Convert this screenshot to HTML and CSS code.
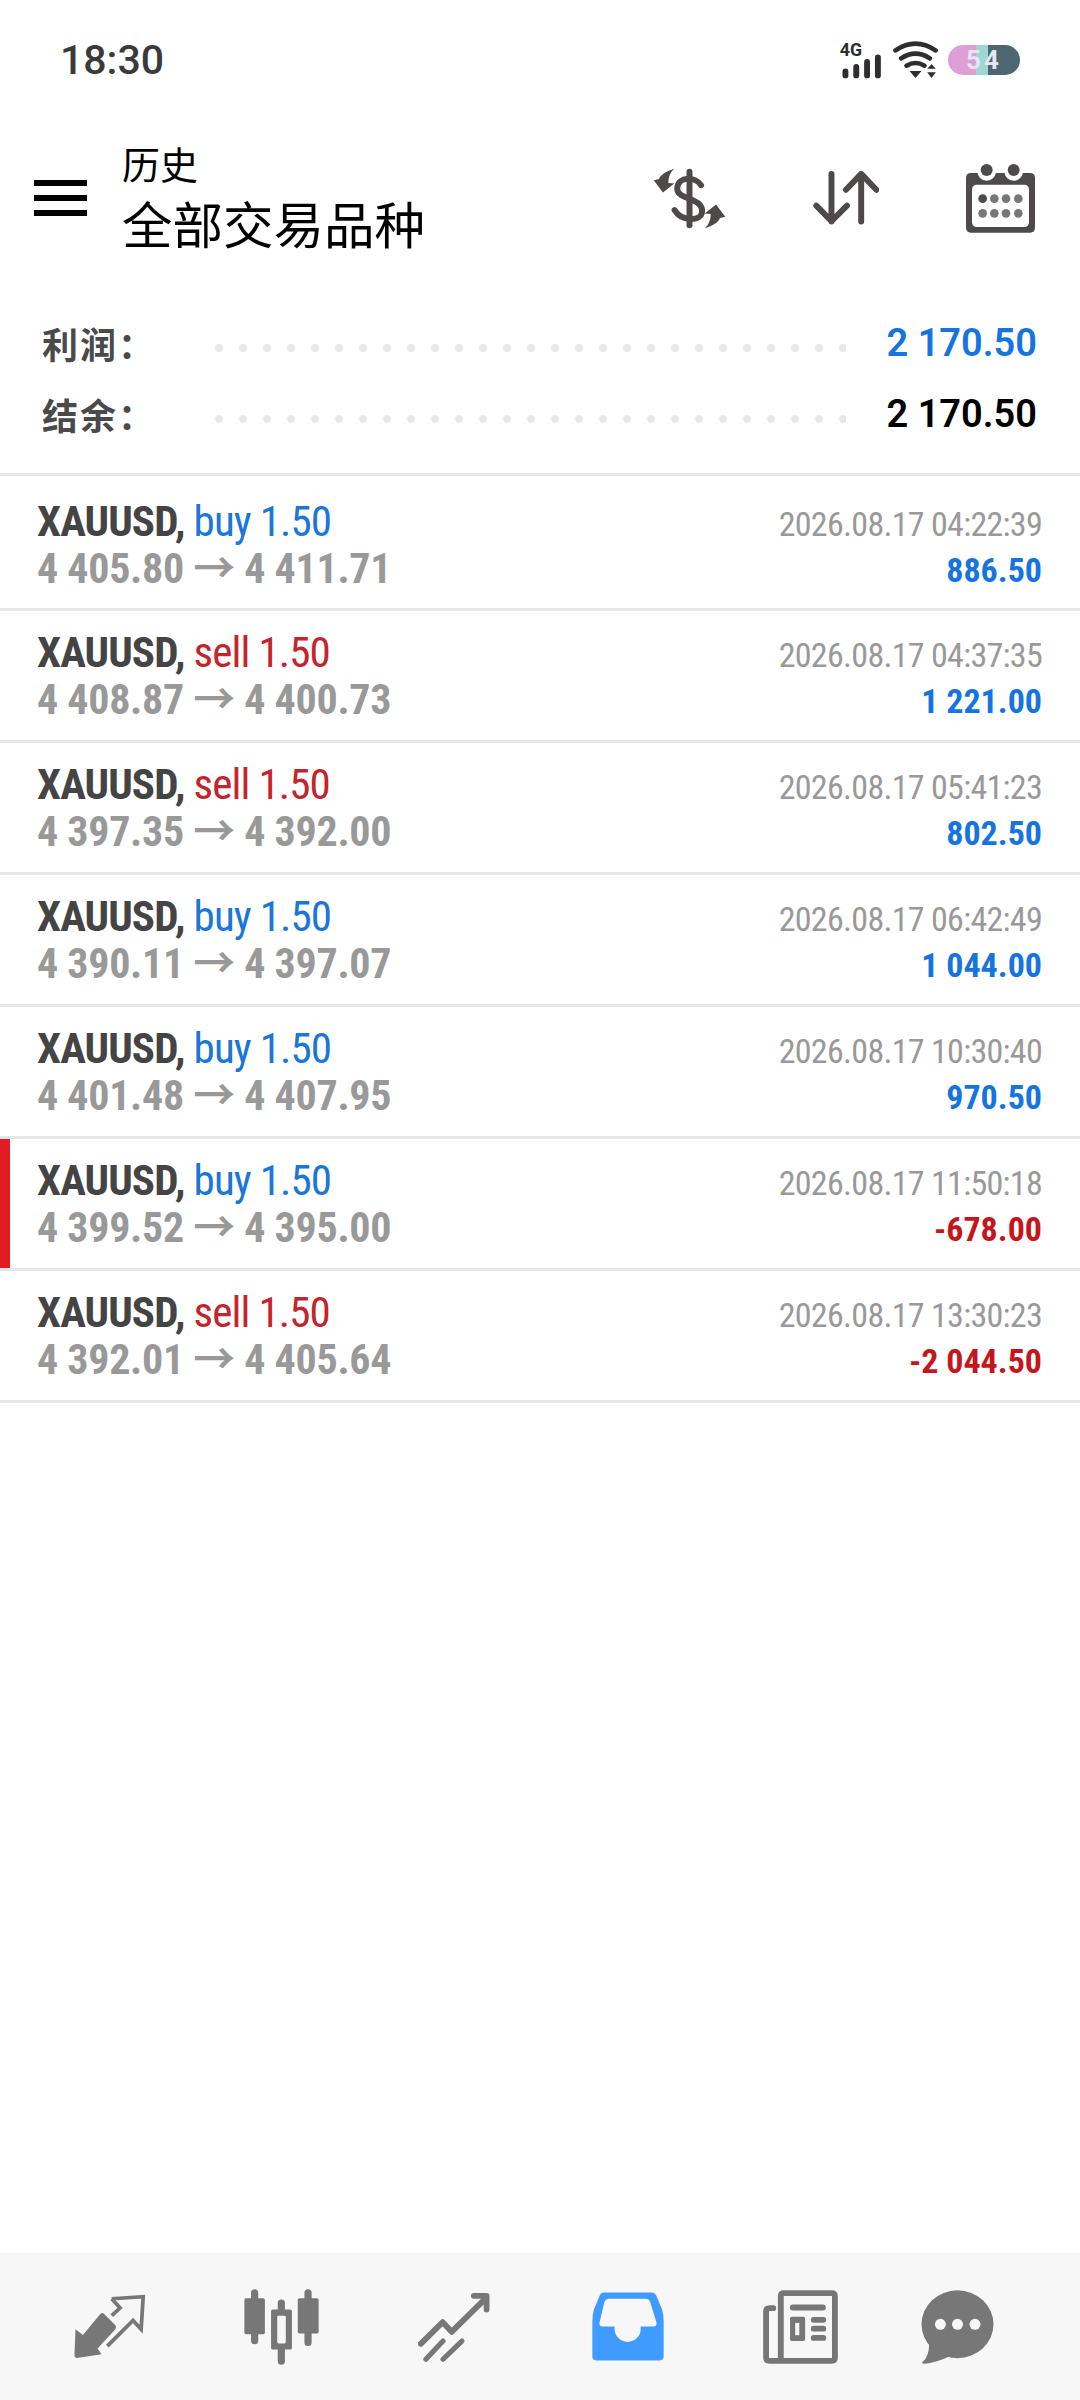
FILE: index.html
```html
<!DOCTYPE html>
<html lang="zh-CN">

<head>
    <meta charset="UTF-8">
    <meta name="viewport" content="width=device-width, initial-scale=1.0">
    <title>历史</title>
    <link rel="stylesheet" href="styles.css">
</head>

<body>
    <!-- Status bar -->
    <div class="status">
        <span class="clock">18:30</span>
        <div class="status_icons">
            <svg class="ic_signal" viewBox="725 110 130 125">
                <text x="724" y="166" class="net">4G</text>
                <path d="M741 212V224M774 198V224M807 183V224M840 169V224" />
            </svg>
            <svg class="ic_wifi" viewBox="880 122 140 114">
                <path class="arc" d="M890 150Q950 110 1010 150M907 174Q950 146 993 174" />
                <path class="arc" d="M923 196Q950 180 977 196" />
                <path d="M932 212H968L950 233ZM985 205L998 192L1011 205ZM985 216H1011L998 233Z" />
            </svg>
            <div class="battery">54</div>
        </div>
    </div>

    <!-- Top bar -->
    <header>
        <div class="burger"><span></span><span></span><span></span></div>
        <div class="titles">
            <div class="title_small">历史</div>
            <div class="title_big">全部交易品种</div>
        </div>
        <div class="actions">
            <svg class="ic_dollar" viewBox="160 503 220 184">
                <path class="line" d="M270 514V676" />
                <path class="line" d="M305 555C290 530 235 525 233 565C232 600 310 590 308 635C305 665 245 665 225 630" />
                <path d="M224 505C200 512 182 524 178 536L162 540L190 577L224 550L206 548C206 530 212 515 224 505Z" />
                <path d="M316 685C340 678 358 666 362 654L378 650L350 613L316 640L334 642C334 660 328 675 316 685Z" />
            </svg>
            <svg class="ic_sort" viewBox="637 511 200 168">
                <path class="line" d="M693 522V666M647 618L693 665L740 618" />
                <path class="line" d="M783 666V522M737 570L783 522L829 570" />
            </svg>
            <svg class="ic_calendar" viewBox="1098 486 207 207">
                <rect x="1098" y="513" width="207" height="179" rx="14" />
                <circle class="cut" cx="1160" cy="508" r="28" />
                <circle class="cut" cx="1241" cy="508" r="28" />
                <circle cx="1160" cy="504" r="18" />
                <circle cx="1241" cy="504" r="18" />
                <rect class="cut" x="1116" y="548" width="171" height="127" rx="14" />
                <circle cx="1148" cy="590" r="13" />
                <g class="soft">
                    <circle cx="1183" cy="590" r="13" />
                    <circle cx="1218" cy="590" r="13" />
                    <circle cx="1255" cy="590" r="13" />
                    <circle cx="1148" cy="634" r="13" />
                    <circle cx="1183" cy="634" r="13" />
                    <circle cx="1218" cy="634" r="13" />
                    <circle cx="1255" cy="634" r="13" />
                </g>
            </svg>
        </div>
    </header>

    <!-- Totals -->
    <div class="summary">
        <div class="sum_row">
            <span class="sum_label">利润：</span>
            <span class="dots"></span>
            <span class="sum_value blue">2 170.50</span>
        </div>
        <div class="sum_row">
            <span class="sum_label">结余：</span>
            <span class="dots"></span>
            <span class="sum_value">2 170.50</span>
        </div>
    </div>

    <!-- Deals -->
    <div class="deals">
        <div class="deal">
            <div>
                <div class="name"><b>XAUUSD,</b> <span class="buy">buy 1.50</span></div>
                <div class="price">4 405.80 → 4 411.71</div>
            </div>
            <div class="right">
                <div class="time">2026.08.17 04:22:39</div>
                <div class="profit">886.50</div>
            </div>
        </div>
        <div class="deal">
            <div>
                <div class="name"><b>XAUUSD,</b> <span class="sell">sell 1.50</span></div>
                <div class="price">4 408.87 → 4 400.73</div>
            </div>
            <div class="right">
                <div class="time">2026.08.17 04:37:35</div>
                <div class="profit">1 221.00</div>
            </div>
        </div>
        <div class="deal">
            <div>
                <div class="name"><b>XAUUSD,</b> <span class="sell">sell 1.50</span></div>
                <div class="price">4 397.35 → 4 392.00</div>
            </div>
            <div class="right">
                <div class="time">2026.08.17 05:41:23</div>
                <div class="profit">802.50</div>
            </div>
        </div>
        <div class="deal">
            <div>
                <div class="name"><b>XAUUSD,</b> <span class="buy">buy 1.50</span></div>
                <div class="price">4 390.11 → 4 397.07</div>
            </div>
            <div class="right">
                <div class="time">2026.08.17 06:42:49</div>
                <div class="profit">1 044.00</div>
            </div>
        </div>
        <div class="deal">
            <div>
                <div class="name"><b>XAUUSD,</b> <span class="buy">buy 1.50</span></div>
                <div class="price">4 401.48 → 4 407.95</div>
            </div>
            <div class="right">
                <div class="time">2026.08.17 10:30:40</div>
                <div class="profit">970.50</div>
            </div>
        </div>
        <div class="deal loss">
            <div>
                <div class="name"><b>XAUUSD,</b> <span class="buy">buy 1.50</span></div>
                <div class="price">4 399.52 → 4 395.00</div>
            </div>
            <div class="right">
                <div class="time">2026.08.17 11:50:18</div>
                <div class="profit minus">-678.00</div>
            </div>
        </div>
        <div class="deal">
            <div>
                <div class="name"><b>XAUUSD,</b> <span class="sell">sell 1.50</span></div>
                <div class="price">4 392.01 → 4 405.64</div>
            </div>
            <div class="right">
                <div class="time">2026.08.17 13:30:23</div>
                <div class="profit minus">-2 044.50</div>
            </div>
        </div>
    </div>

    <!-- Bottom navigation -->
    <nav>
        <svg class="tab tab_quotes" viewBox="214 164 212 192">
            <path d="M218 268L240 285L292 222Q297 218 302 222L336 256Q340 262 336 268L283 325L295 342L222 353Q215 353 215 346Z" />
            <path class="open" d="M325 178L418 172L412 268L388 242L312 318M325 178L350 205L325 228" />
        </svg>
        <svg class="tab tab_chart" viewBox="708 147 219 222">
            <path class="wick" d="M739 158V298M817 188V358M895 158V303" />
            <rect x="709" y="174" width="60" height="105" rx="5" />
            <rect x="787" y="207" width="61" height="117" rx="5" />
            <rect x="865" y="174" width="61" height="103" rx="5" />
            <rect class="hole" x="805" y="225" width="25" height="81" rx="4" />
        </svg>
        <svg class="tab tab_trade" viewBox="1212 153 210 202">
            <path class="open trend" d="M1220 303L1284 240L1310 268L1410 170M1375 163H1412V203" />
            <path class="open dash" d="M1235 348L1285 295M1285 348L1340 295" />
        </svg>
        <svg class="tab tab_history" viewBox="146 155 210 200">
            <path d="M180 156H320Q330 156 335 168L350 205Q355 220 355 240V342Q355 354 343 354H159Q147 354 147 342V240Q147 220 152 205L167 168Q172 156 180 156Z" />
            <path class="hole" d="M196 174H302Q312 174 316 184L334 243Q336 255 326 255H288V262A38 38 0 0 1 212 262V255H176Q166 255 168 243L182 184Q186 174 196 174Z" />
        </svg>
        <svg class="tab tab_news" viewBox="646 147 219 216">
            <path class="open sheet" d="M706 156H847Q856 156 856 165V345Q856 354 847 354H665Q655 354 655 345V210Q655 200 665 200H676M698 354V165Q698 156 706 156" />
            <path class="open rows" d="M733 198H821M794 234H822M794 260H822M794 287H822" />
            <rect x="725" y="225" width="44" height="71" rx="5" />
            <rect class="hole" x="740" y="243" width="12" height="36" />
        </svg>
        <svg class="tab tab_chat" viewBox="1107 147 212 216">
            <ellipse cx="1213" cy="247" rx="105" ry="99" />
            <path d="M1130 300Q1132 340 1110 358Q1108 362 1116 362Q1150 360 1195 338Z" />
            <circle class="hole" cx="1163" cy="247" r="16" />
            <circle class="hole" cx="1213" cy="247" r="16" />
            <circle class="hole" cx="1264" cy="247" r="16" />
        </svg>
    </nav>
</body>

</html>
```

FILE: styles.css
```css
/* Global Styles */
body {
    font-family: Roboto, 'Noto Sans CJK SC', sans-serif;
    margin: 0;
    padding: 0;
    height: 2400px;
    display: flex;
    flex-direction: column;
    background: white;
    color: #000;
}

/* Status bar */
.status {
    height: 120px;
    padding: 0 60px;
    display: flex;
    align-items: center;
    justify-content: space-between;
}

.clock {
    font-size: 41px;
    font-weight: 500;
    color: #3a3a3a;
}

.status_icons {
    display: flex;
    align-items: center;
    gap: 9px;
}

.ic_signal {
    width: 43px;
    height: 41px;
    margin-top: -4px;
    fill: #2e2e2e;
}

.ic_signal path {
    stroke: #2e2e2e;
    stroke-width: 18;
    stroke-linecap: round;
    fill: none;
}

.net {
    font-size: 54px;
    font-weight: 700;
}

.ic_wifi {
    width: 47px;
    height: 38px;
    fill: #2e2e2e;
}

.ic_wifi .arc {
    fill: none;
    stroke: #2e2e2e;
    stroke-width: 14;
    stroke-linecap: round;
}

.battery {
    width: 72px;
    height: 30px;
    border-radius: 15px;
    background: linear-gradient(90deg, #dd9fd6 0, #dd9fd6 39%, #9fd6cf 39%, #9fd6cf 56%, #4d6670 56%);
    color: #e3e6f6;
    font-size: 26px;
    font-weight: 700;
    line-height: 30px;
    letter-spacing: 3px;
    text-align: center;
}

/* Top bar */
header {
    height: 156px;
    padding: 0 45px 0 34px;
    display: flex;
    align-items: center;
}

.burger {
    width: 53px;
    display: flex;
    flex-direction: column;
    gap: 9px;
}

.burger span {
    height: 6px;
    background: black;
}

.titles {
    margin-left: 35px;
    flex: 1;
}

.title_small {
    font-size: 38px;
    line-height: 56px;
}

.title_big {
    font-size: 50.5px;
    line-height: 65px;
}

.actions {
    display: flex;
    align-items: center;
    gap: 87px;
}

.actions svg {
    fill: #4f4a4a;
}

.actions .line {
    fill: none;
    stroke: #4f4a4a;
    stroke-width: 18;
    stroke-linecap: round;
    stroke-linejoin: round;
}

.actions .cut {
    fill: white;
}

.actions .soft {
    fill: #777;
}

.ic_dollar {
    width: 73px;
    height: 61px;
}

.ic_sort {
    width: 66px;
    height: 56px;
}

.ic_calendar {
    width: 69px;
    height: 69px;
}

/* Totals */
.summary {
    padding: 31px 43px 24px 42px;
    border-bottom: 3px solid #e6e6e6;
}

.sum_row {
    height: 71px;
    display: flex;
    align-items: center;
}

.sum_label {
    width: 170px;
    font-size: 36px;
    letter-spacing: 2px;
    font-weight: 700;
    color: #4a4a4a;
}

.dots {
    flex: 1;
    height: 8px;
    margin-top: 10px;
    background: radial-gradient(circle, #e8e8e8 3.5px, transparent 4.5px) -5px 0 / 24px 8px repeat-x;
}

.sum_value {
    margin-left: 41px;
    font-size: 38px;
    font-weight: 600;
}

.blue {
    color: #1574e0;
}

/* Deals */
.deal {
    height: 129px;
    padding: 0 38px 0 37px;
    border-bottom: 3px solid #e6e6e6;
    display: flex;
    align-items: center;
    justify-content: space-between;
    font-stretch: 75%;
}

.deal:first-child {
    height: 126px;
    padding-top: 6px;
}

.loss {
    box-shadow: inset 10px 0 #e31b23;
}

.name {
    font-size: 43px;
    line-height: 47px;
    letter-spacing: -0.9px;
    color: #444;
}

.buy {
    color: #1a76d8;
}

.sell {
    color: #c4242c;
}

.price {
    font-size: 42px;
    line-height: 47px;
    letter-spacing: -0.3px;
    font-weight: 700;
    color: #999;
}

.right {
    text-align: right;
    padding-top: 4px;
}

.time {
    font-size: 34px;
    line-height: 46px;
    letter-spacing: -0.7px;
    color: #999;
}

.profit {
    font-size: 34px;
    line-height: 46px;
    font-weight: 700;
    color: #1574e0;
}

.minus {
    color: #c4161c;
}

/* Bottom navigation */
nav {
    margin-top: auto;
    height: 147px;
    padding-left: 74px;
    background: #f7f7f7;
    display: flex;
    align-items: center;
    gap: 98px;
}

.tab {
    fill: #777;
}

.tab .open {
    fill: none;
    stroke: #777;
    stroke-width: 11;
    stroke-linejoin: miter;
}

.tab .trend {
    stroke-width: 17;
    stroke-linecap: round;
    stroke-linejoin: round;
}

.tab .dash {
    stroke-width: 15;
    stroke-linecap: round;
}

.tab .sheet {
    stroke-width: 17;
    stroke-linecap: round;
}

.tab .rows {
    stroke-width: 17;
    stroke-linecap: round;
}

.tab .wick {
    stroke: #777;
    stroke-width: 21;
    stroke-linecap: round;
}

.tab .hole {
    fill: #f7f7f7;
}

.tab_quotes {
    width: 72px;
    height: 65px;
}

.tab_chart {
    width: 75px;
    height: 76px;
}

.tab_trade {
    width: 72px;
    height: 70px;
    margin-left: 1px;
}

.tab_history {
    width: 72px;
    height: 69px;
    margin-left: 4px;
    fill: #3f9bff;
}

.tab_news {
    width: 75px;
    height: 74px;
    margin-left: 1px;
}

.tab_chat {
    width: 73px;
    height: 74px;
    margin-left: -15px;
}
```
